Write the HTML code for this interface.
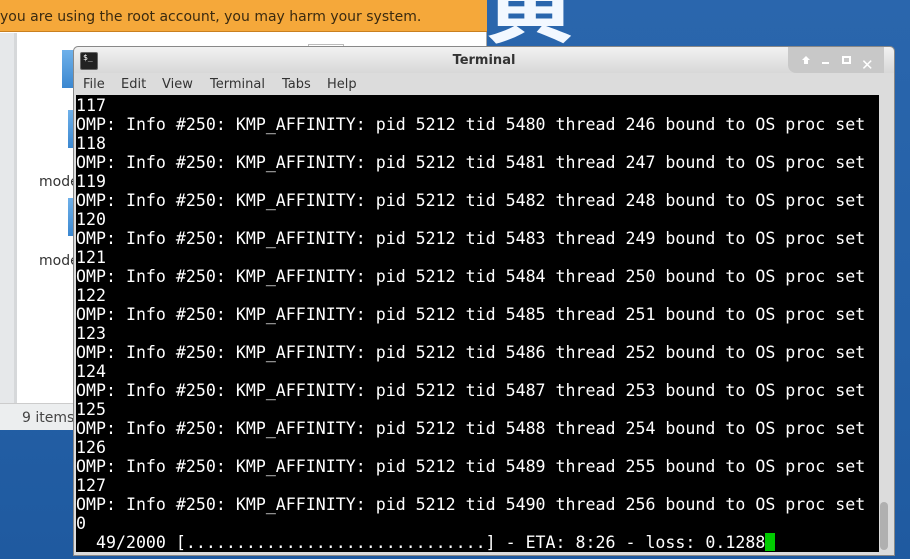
<!DOCTYPE html>
<html><head><meta charset="utf-8"><style>
*{margin:0;padding:0;box-sizing:border-box}
body{width:910px;height:559px;overflow:hidden;position:relative;background:linear-gradient(180deg,#2a66ad,#2460a6 60%,#1f5aa0);font-family:"DejaVu Sans","Liberation Sans",sans-serif}
.big{position:absolute;left:484px;top:-50px;font:bold 92px "Noto Sans CJK SC",sans-serif;color:#f2f8ff;line-height:1}
.fm{position:absolute;left:0;top:0;width:487px;height:430px;background:#fff;border-right:1px solid #aaa}
.warn{position:absolute;left:0;top:0;width:487px;height:32px;background:#f5a83a;color:#3a2a10;font-size:14px;line-height:34px;border-bottom:1px solid #c98020}
.side{position:absolute;left:0;top:33px;width:17px;height:370px;background:#e6e8ea;border-right:3px solid #d6d8da}
.status{position:absolute;left:0;top:403px;width:487px;height:27px;background:#eceeef;border-top:1px solid #ccc;font-size:14px;color:#444;padding:6px 0 0 22px}
.fold{position:absolute;background:linear-gradient(#6fb1ea,#3b87d0);width:20px;height:38px}
.lbl{position:absolute;font-size:14px;color:#333}
.win{position:absolute;left:73px;top:46px;width:822px;height:510px;background:#dcdcdc;border:1px solid #888;border-radius:5px 5px 0 0}
.title{position:absolute;left:0;top:0;width:100%;height:26px;background:linear-gradient(#f2f2f2,#d8d8d8);border-radius:5px 5px 0 0;font-weight:bold;font-size:13px;color:#333;text-align:center;line-height:28px}
.ic{position:absolute;left:6px;top:5px;width:18px;height:18px;background:#222;border:1px solid #666;border-radius:2px;color:#fff;font:8px monospace;line-height:10px;padding-left:2px;text-align:left}
.btns{position:absolute;right:10px;top:0;width:96px;height:26px;background:#c8c8c8;border-radius:0 0 0 8px;color:#fff;font-size:13px;text-align:left}
.btns span{position:absolute}
.menu{position:absolute;left:0;top:26px;height:22px;font-size:13px;color:#333;line-height:24px}
.menu span{position:absolute;white-space:nowrap}
.term{position:absolute;left:2px;top:48px;width:803px;height:457px;background:#000;color:#fff;font:16.6px "DejaVu Sans Mono","Liberation Mono",monospace;line-height:19px;white-space:pre;overflow:hidden;padding-top:1px}
.sb{position:absolute;left:806px;top:455px;width:8px;height:48px;background:#b0b0b0;border-radius:4px}
.cur{display:inline-block;width:10px;height:18px;background:#0c0;vertical-align:-3px}
</style></head><body>
<div class="big">黄</div>
<div class="fm">
<div class="warn">you are using the root account, you may harm your system.</div>
<div class="side"></div>
<div class="fold" style="left:62px;top:50px;width:14px"></div>
<div class="fold" style="left:68px;top:110px;width:8px"></div>
<div class="fold" style="left:68px;top:198px;width:8px"></div>
<div class="lbl" style="left:39px;top:174px">mode</div>
<div class="lbl" style="left:39px;top:253px">mode</div>
<div style="position:absolute;left:308px;top:44px;width:36px;height:4px;border:1px solid #bbb"></div>
<div class="status">9 items</div>
</div>
<div class="win">
<div class="title">Terminal<div class="ic">$_</div>
<div class="btns">
<span style="left:14px;top:9px;width:0;height:0;border-left:4px solid transparent;border-right:4px solid transparent;border-bottom:4px solid #fff"></span>
<span style="left:16px;top:13px;width:4px;height:4px;background:#fff"></span>
<span style="left:34px;top:15px;width:7px;height:2px;background:#fff"></span>
<span style="left:54px;top:9px;width:9px;height:8px;border:2px solid #fff"></span>
<span style="left:73px;top:4px;font-size:15px">✕</span></div></div>
<div class="menu"><span style="left:9px">File</span><span style="left:47px">Edit</span><span style="left:88px">View</span><span style="left:136px">Terminal</span><span style="left:208px">Tabs</span><span style="left:253px">Help</span></div>
<div class="term">117
OMP: Info #250: KMP_AFFINITY: pid 5212 tid 5480 thread 246 bound to OS proc set
118
OMP: Info #250: KMP_AFFINITY: pid 5212 tid 5481 thread 247 bound to OS proc set
119
OMP: Info #250: KMP_AFFINITY: pid 5212 tid 5482 thread 248 bound to OS proc set
120
OMP: Info #250: KMP_AFFINITY: pid 5212 tid 5483 thread 249 bound to OS proc set
121
OMP: Info #250: KMP_AFFINITY: pid 5212 tid 5484 thread 250 bound to OS proc set
122
OMP: Info #250: KMP_AFFINITY: pid 5212 tid 5485 thread 251 bound to OS proc set
123
OMP: Info #250: KMP_AFFINITY: pid 5212 tid 5486 thread 252 bound to OS proc set
124
OMP: Info #250: KMP_AFFINITY: pid 5212 tid 5487 thread 253 bound to OS proc set
125
OMP: Info #250: KMP_AFFINITY: pid 5212 tid 5488 thread 254 bound to OS proc set
126
OMP: Info #250: KMP_AFFINITY: pid 5212 tid 5489 thread 255 bound to OS proc set
127
OMP: Info #250: KMP_AFFINITY: pid 5212 tid 5490 thread 256 bound to OS proc set
0
  49/2000 [..............................] - ETA: 8:26 - loss: 0.1288<span class="cur"></span></div>
<div class="sb"></div>
</div>
</body></html>
